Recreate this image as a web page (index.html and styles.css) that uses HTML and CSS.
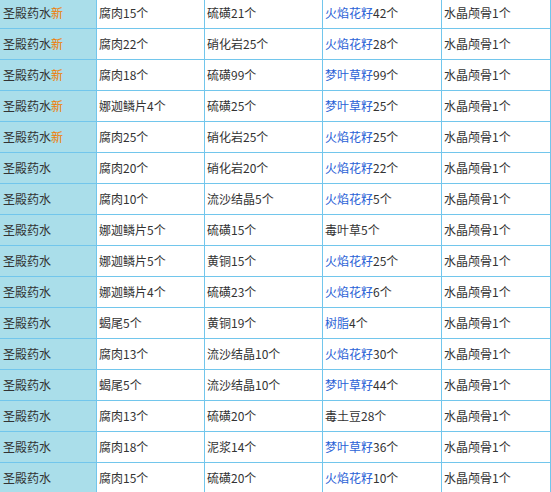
FILE: index.html
```html
<!DOCTYPE html>
<html lang="zh-CN">
<head>
<meta charset="utf-8">
<link rel="stylesheet" href="styles.css">
</head>
<body>
<table class="recipes">
<colgroup>
<col class="c1"><col class="c2"><col class="c3"><col class="c4"><col class="c5">
</colgroup>
<tbody>
<tr><td class="name">圣殿药水<span class="new">新</span></td><td>腐肉15个</td><td>硫磺21个</td><td><span class="link">火焰花籽</span>42个</td><td>水晶颅骨1个</td></tr>
<tr><td class="name">圣殿药水<span class="new">新</span></td><td>腐肉22个</td><td>硝化岩25个</td><td><span class="link">火焰花籽</span>28个</td><td>水晶颅骨1个</td></tr>
<tr><td class="name">圣殿药水<span class="new">新</span></td><td>腐肉18个</td><td>硫磺99个</td><td><span class="link">梦叶草籽</span>99个</td><td>水晶颅骨1个</td></tr>
<tr><td class="name">圣殿药水<span class="new">新</span></td><td>娜迦鳞片4个</td><td>硫磺25个</td><td><span class="link">梦叶草籽</span>25个</td><td>水晶颅骨1个</td></tr>
<tr><td class="name">圣殿药水<span class="new">新</span></td><td>腐肉25个</td><td>硝化岩25个</td><td><span class="link">火焰花籽</span>25个</td><td>水晶颅骨1个</td></tr>
<tr><td class="name">圣殿药水</td><td>腐肉20个</td><td>硝化岩20个</td><td><span class="link">火焰花籽</span>22个</td><td>水晶颅骨1个</td></tr>
<tr><td class="name">圣殿药水</td><td>腐肉10个</td><td>流沙结晶5个</td><td><span class="link">火焰花籽</span>5个</td><td>水晶颅骨1个</td></tr>
<tr><td class="name">圣殿药水</td><td>娜迦鳞片5个</td><td>硫磺15个</td><td>毒叶草5个</td><td>水晶颅骨1个</td></tr>
<tr><td class="name">圣殿药水</td><td>娜迦鳞片5个</td><td>黄铜15个</td><td><span class="link">火焰花籽</span>25个</td><td>水晶颅骨1个</td></tr>
<tr><td class="name">圣殿药水</td><td>娜迦鳞片4个</td><td>硫磺23个</td><td><span class="link">火焰花籽</span>6个</td><td>水晶颅骨1个</td></tr>
<tr><td class="name">圣殿药水</td><td>蝎尾5个</td><td>黄铜19个</td><td><span class="link">树脂</span>4个</td><td>水晶颅骨1个</td></tr>
<tr><td class="name">圣殿药水</td><td>腐肉13个</td><td>流沙结晶10个</td><td><span class="link">火焰花籽</span>30个</td><td>水晶颅骨1个</td></tr>
<tr><td class="name">圣殿药水</td><td>蝎尾5个</td><td>流沙结晶10个</td><td><span class="link">梦叶草籽</span>44个</td><td>水晶颅骨1个</td></tr>
<tr><td class="name">圣殿药水</td><td>腐肉13个</td><td>硫磺20个</td><td>毒土豆28个</td><td>水晶颅骨1个</td></tr>
<tr><td class="name">圣殿药水</td><td>腐肉18个</td><td>泥浆14个</td><td><span class="link">梦叶草籽</span>36个</td><td>水晶颅骨1个</td></tr>
<tr><td class="name">圣殿药水</td><td>腐肉15个</td><td>硫磺20个</td><td><span class="link">火焰花籽</span>10个</td><td>水晶颅骨1个</td></tr>
</tbody>
</table>
</body>
</html>
```

FILE: styles.css
```css
html, body {
  margin: 0;
  padding: 0;
  background: #ffffff;
}

body {
  width: 551px;
  height: 492px;
  overflow: hidden;
}

.recipes {
  margin-top: -2px;
  width: 551px;
  table-layout: fixed;
  border-collapse: separate;
  border-spacing: 0;
  font-family: "Microsoft YaHei", "Noto Sans CJK SC", "Noto Sans", sans-serif;
  font-size: 12px;
  color: #333333;
}

.c1 { width: 97px; }
.c2 { width: 108px; }
.c3 { width: 118px; }
.c4 { width: 119px; }
.c5 { width: 109px; }

.recipes td {
  height: 30px;
  padding: 0 0 0 2px;
  border-right: 1px solid #72c6ec;
  border-bottom: 1px solid #72c6ec;
  vertical-align: middle;
  white-space: nowrap;
  box-sizing: border-box;
  line-height: 16px;
}

.recipes tr td {
  height: 31px;
}

.recipes td.name {
  background: #aadeea;
  padding-left: 3px;
}

.new {
  color: #f07c00;
}

.link {
  color: #2a62d6;
}
```
